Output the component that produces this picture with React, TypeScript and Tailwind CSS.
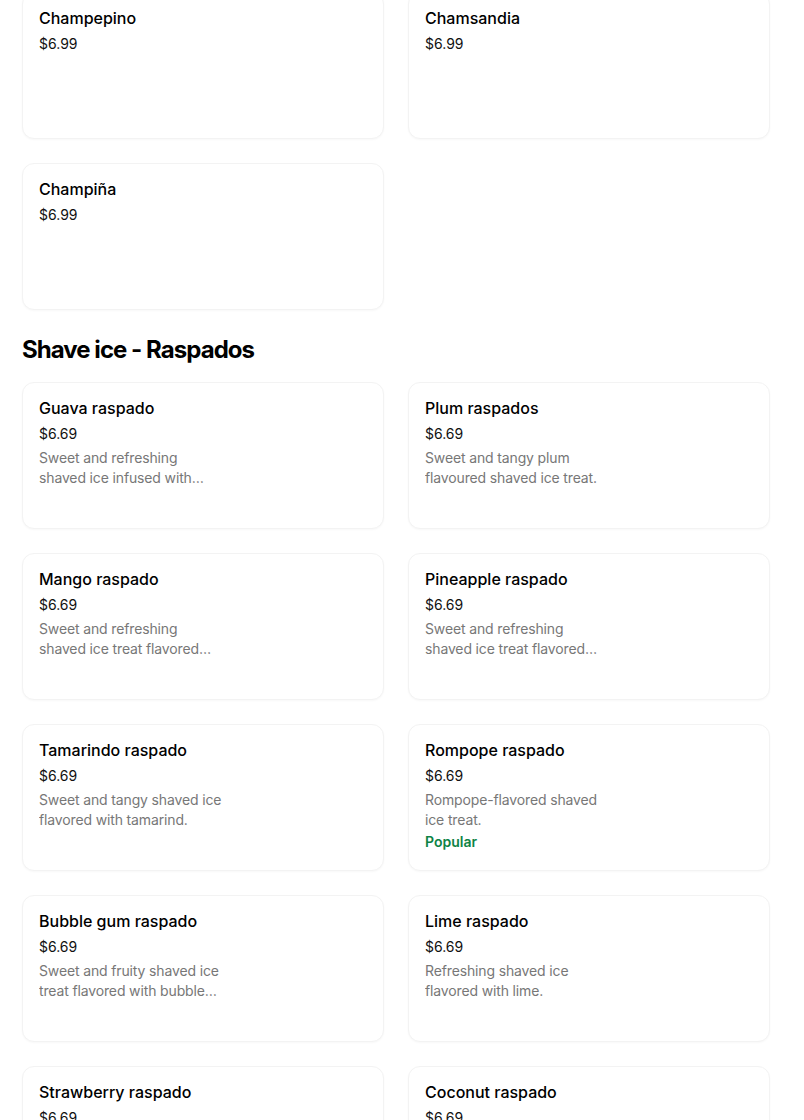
import React from "react"

type Item = {
  name: string
  price: string
  desc?: string
  popular?: boolean
}

const topItems: Item[] = [
  { name: "Champepino", price: "$6.99" },
  { name: "Chamsandia", price: "$6.99" },
  { name: "Champiña", price: "$6.99" },
]

const raspados: Item[] = [
  { name: "Guava raspado", price: "$6.69", desc: "Sweet and refreshing shaved ice infused with guava flavor." },
  { name: "Plum raspados", price: "$6.69", desc: "Sweet and tangy plum flavoured shaved ice treat." },
  { name: "Mango raspado", price: "$6.69", desc: "Sweet and refreshing shaved ice treat flavored with mango." },
  { name: "Pineapple raspado", price: "$6.69", desc: "Sweet and refreshing shaved ice treat flavored with pineapple." },
  { name: "Tamarindo raspado", price: "$6.69", desc: "Sweet and tangy shaved ice flavored with tamarind." },
  { name: "Rompope raspado", price: "$6.69", desc: "Rompope-flavored shaved ice treat.", popular: true },
  { name: "Bubble gum raspado", price: "$6.69", desc: "Sweet and fruity shaved ice treat flavored with bubble gum." },
  { name: "Lime raspado", price: "$6.69", desc: "Refreshing shaved ice flavored with lime." },
  { name: "Strawberry raspado", price: "$6.69", desc: "Sweet shaved ice flavored with strawberry." },
  { name: "Coconut raspado", price: "$6.69", desc: "Creamy shaved ice flavored with coconut." },
]

function ItemCard({ item }: { item: Item }) {
  return (
    <div className="h-[147px] rounded-xl border border-[#f3f3f3] bg-white px-4 pt-[15px] shadow-[0_1px_2px_rgba(0,0,0,0.03)]">
      <div className="text-base font-medium leading-5 text-black">{item.name}</div>
      <div className="mt-[6px] text-sm leading-5 text-[#111]">{item.price}</div>
      {item.desc && (
        <div className="mt-1 line-clamp-2 w-[185px] text-sm leading-5 tracking-[-0.01em] text-[#777]">{item.desc}</div>
      )}
      {item.popular && <div className="mt-[2px] text-sm font-semibold leading-5 text-[#0e8345]">Popular</div>}
    </div>
  )
}

export default function App() {
  return (
    <div className="min-h-screen bg-white font-['Inter',sans-serif]">
      <div className="ml-[22px] mt-[-8px] w-[748px]">
        <div className="grid grid-cols-2 gap-6">
          {topItems.map((it) => (
            <ItemCard key={it.name} item={it} />
          ))}
        </div>
        <h2 className="mt-6 mb-4 text-2xl font-bold leading-8 tracking-[-0.04em] text-black">Shave ice - Raspados</h2>
        <div className="grid grid-cols-2 gap-6">
          {raspados.map((it) => (
            <ItemCard key={it.name} item={it} />
          ))}
        </div>
      </div>
    </div>
  )
}
